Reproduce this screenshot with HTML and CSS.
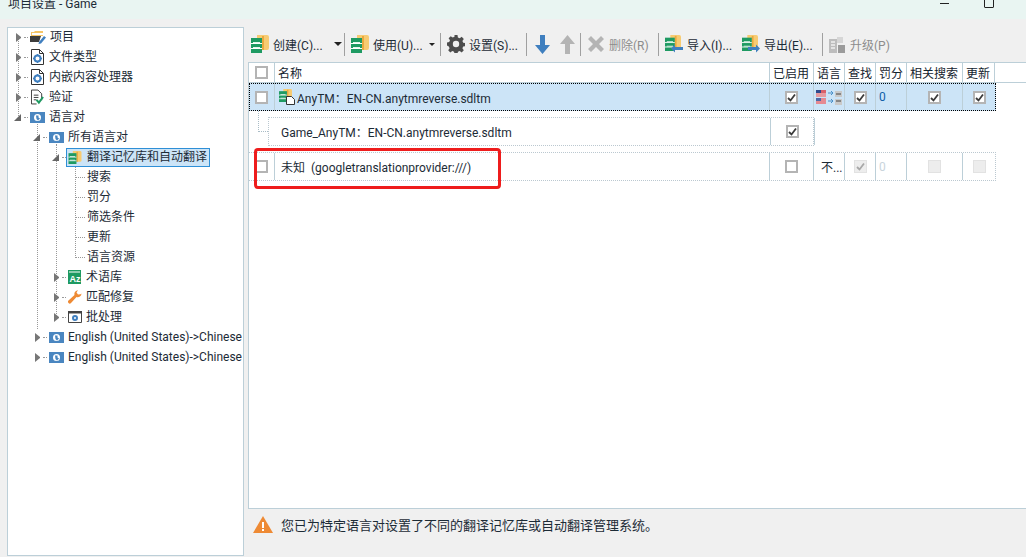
FILE: index.html
```html
<!DOCTYPE html>
<html lang="zh-CN">
<head>
    <meta charset="UTF-8">
    <title>项目设置 - Game</title>
    <link rel="stylesheet" href="styles.css">
</head>
<body>
    <svg class="defs" width="0" height="0">
        <symbol id="tm" viewBox="0 0 18 18">
            <path d="M6 0h10a2 2 0 0 1 2 2v11a2 2 0 0 1-2 2H6z" fill="#f7cb72"/>
            <path d="M11 1h2v14h-2z" fill="#e9a93f"/>
            <path d="M0 3h11v15H0z" fill="#1e9a62"/>
            <path d="M2 7h7v1H2zM2 12h7v1H2z" fill="#e6f6ee"/>
            <path d="M0 8.500h11M0 13.500h11" stroke="#fff"/>
        </symbol>
        <symbol id="globe" viewBox="0 0 15 11">
            <path d="M0 0h15v11H0z" fill="#4a86c0"/>
            <circle cx="7.500" cy="5.500" r="3.500" fill="#fff"/>
            <path d="M6 3.500h2.500v2l1.500 1L8 8.500 6.500 7z" fill="#4a86c0"/>
        </symbol>
        <symbol id="docgear" viewBox="0 0 13 16">
            <path d="M.5.500h8l4 4v11H.5z" fill="#fff" stroke="#333"/>
            <path d="M8.500.500v4h4" fill="none" stroke="#333"/>
            <circle cx="6.500" cy="9.500" r="3" fill="none" stroke="#3f7fbf" stroke-width="2"/>
            <path d="M6.500 5v1.500M6.500 12.500V14M2 9.500h1.500M9.500 9.500H11" stroke="#3f7fbf" stroke-width="1.500"/>
        </symbol>
        <symbol id="check" viewBox="0 0 9 9">
            <path d="M1 5l2.500 2.500L8 1.500" fill="none" stroke="currentColor" stroke-width="1.800"/>
        </symbol>
        <symbol id="gear" viewBox="0 0 18 18">
            <path d="M7.500 0h3l.4 2.400 1.800.8 2-1.400 2.100 2.100-1.400 2 .8 1.800 2.400.4v3l-2.400.4-.8 1.800 1.400 2-2.100 2.100-2-1.400-1.800.8-.4 2.400h-3l-.4-2.400-1.800-.8-2 1.400-2.100-2.100 1.400-2-.8-1.800L-.2 10.500v-3l2.400-.4.8-1.800-1.400-2 2.100-2.100 2 1.400 1.800-.8z" fill="#4d4d4d"/>
            <circle cx="9" cy="9" r="3.200" fill="#f0f0f0"/>
        </symbol>
    </svg>

    <header class="titlebar">
        <span class="title">项目设置 - Game</span>
        <span class="win-min"></span>
        <span class="win-max"></span>
    </header>

    <div class="main">
        <nav class="tree">
            <i class="vline vline-root"></i>
            <i class="vline vline-pairs"></i>
            <i class="vline vline-tm"></i>
            <i class="vline vline-sub"></i>

            <div class="node lv0"><b class="tri"></b><i class="dash"></i>
                <svg class="ico" width="16" height="14" viewBox="0 0 16 14"><path d="M1 2h3l1-1h8v5H1z" fill="#f5c566"/><path d="M2 3h11v2H2z" fill="#fff"/><path d="M0 6h11l-2 6H0z" fill="#3c3c3c"/><path d="M9 12l5-6 2 1.500-5 6-2.500.5z" fill="#3f7fbf"/></svg>
                <span>项目</span></div>
            <div class="node lv0"><b class="tri"></b><i class="dash"></i><svg class="ico doc" width="13" height="16"><use href="#docgear"/></svg><span>文件类型</span></div>
            <div class="node lv0"><b class="tri"></b><i class="dash"></i><svg class="ico doc" width="13" height="16"><use href="#docgear"/></svg><span>内嵌内容处理器</span></div>
            <div class="node lv0"><b class="tri"></b><i class="dash"></i>
                <svg class="ico doc" width="13" height="16" viewBox="0 0 14 16"><path d="M.5.500h7l4 4v7M6 15.500H.5V.500" fill="#fff" stroke="#333"/><path d="M3 6h5M3 8.500h5M3 11h3" stroke="#333"/><path d="M6 11l2.500 3L13 8" fill="none" stroke="#1e9a62" stroke-width="2.200"/></svg>
                <span>验证</span></div>
            <div class="node lv0"><b class="tri open"></b><i class="dash"></i><svg class="ico" width="15" height="11"><use href="#globe"/></svg><span>语言对</span></div>
            <div class="node lv1"><b class="tri open"></b><i class="dash"></i><svg class="ico" width="15" height="11"><use href="#globe"/></svg><span>所有语言对</span></div>
            <div class="node lv2"><b class="tri open"></b><i class="dash"></i>
                <div class="selected"><svg class="ico" width="14" height="13"><use href="#tm"/></svg><span>翻译记忆库和自动翻译</span></div></div>
            <div class="node lv3"><i class="dash"></i><span>搜索</span></div>
            <div class="node lv3"><i class="dash"></i><span>罚分</span></div>
            <div class="node lv3"><i class="dash"></i><span>筛选条件</span></div>
            <div class="node lv3"><i class="dash"></i><span>更新</span></div>
            <div class="node lv3"><i class="dash"></i><span>语言资源</span></div>
            <div class="node lv2"><b class="tri"></b><i class="dash"></i>
                <svg class="ico" width="13" height="14" viewBox="0 0 13 14"><path d="M0 0h13v14H0z" fill="#1e9a62"/><path d="M1 2h11" stroke="#fff"/><text class="az" x="1.500" y="12">Az</text></svg>
                <span class="term">术语库</span></div>
            <div class="node lv2"><b class="tri"></b><i class="dash"></i>
                <svg class="ico" width="14" height="14" viewBox="0 0 14 14"><path d="M13.500 3.500a3.800 3.800 0 0 1-5 3.600L3 13a1.700 1.700 0 0 1-2.500-2.500L6.500 5A3.800 3.800 0 0 1 10 .2L8.500 2.500 10 4.500l2.500-.2z" fill="#ee8a34"/></svg>
                <span>匹配修复</span></div>
            <div class="node lv2"><b class="tri"></b><i class="dash"></i>
                <svg class="ico" width="14" height="12" viewBox="0 0 14 12"><path d="M.5.500h13v11H.5z" fill="#fff" stroke="#444"/><path d="M0 0h14v2.500H0z" fill="#444"/><circle cx="7" cy="7" r="2" fill="none" stroke="#3f7fbf" stroke-width="2"/></svg>
                <span>批处理</span></div>
            <div class="node lv1"><b class="tri"></b><i class="dash"></i><svg class="ico" width="15" height="11"><use href="#globe"/></svg><span>English (United States)-&gt;Chinese (</span></div>
            <div class="node lv1"><b class="tri"></b><i class="dash"></i><svg class="ico" width="15" height="11"><use href="#globe"/></svg><span>English (United States)-&gt;Chinese (</span></div>
        </nav>

        <div class="content">
            <div class="toolbar">
                <button class="tool w-create"><svg width="18" height="18"><use href="#tm"/></svg>创建(C)...</button>
                <b class="caret"></b><i class="sep"></i>
                <button class="tool w-use"><svg width="18" height="18"><use href="#tm"/></svg>使用(U)...</button>
                <b class="caret small"></b><i class="sep"></i>
                <button class="tool w-set"><svg width="18" height="18"><use href="#gear"/></svg>设置(S)...</button>
                <i class="sep s-move"></i>
                <button class="tool w-down"><svg width="15" height="19" viewBox="0 0 15 19"><path d="M5 0h5v10h5l-7.500 9L0 10h5z" fill="#3f7fbf"/></svg></button>
                <button class="tool w-up off"><svg width="15" height="19" viewBox="0 0 15 19"><path d="M5 19h5V9h5L7.500 0 0 9h5z" fill="#b4b4b4"/></svg></button>
                <i class="sep s-del"></i>
                <button class="tool w-del off"><svg width="16" height="16" viewBox="0 0 16 16"><path d="M0 3l3-3 5 5 5-5 3 3-5 5 5 5-3 3-5-5-5 5-3-3 5-5z" fill="#b4b4b4"/></svg>删除(R)</button>
                <i class="sep"></i>
                <button class="tool w-imp"><svg width="18" height="18" viewBox="0 0 18 18"><use href="#tm" width="16" height="16"/><path d="M18 12H10V9.500L6 13.500l4 4V15h8z" fill="#3f7fbf"/></svg>导入(I)...</button>
                <button class="tool w-exp"><svg width="18" height="18" viewBox="0 0 18 18"><use href="#tm" width="16" height="16"/><path d="M6 12h8V9.500l4 4-4 4V15H6z" fill="#3f7fbf"/></svg>导出(E)...</button>
                <i class="sep"></i>
                <button class="tool w-upg off"><svg width="16" height="17" viewBox="0 0 16 17"><path d="M0 3h8v14H0z" fill="#bdbdbd"/><path d="M2 6h4M2 9h4M2 12h4" stroke="#f0f0f0" stroke-width="1.500"/><path d="M8 1h6v6H8z" fill="#d6d6d6"/><path d="M9 9h7v8H9z" fill="#9b9b9b"/></svg>升级(P)</button>
            </div>

            <div class="panel">
                <div class="grid head">
                    <div class="cell center"><span class="box"></span></div>
                    <div class="cell">名称</div>
                    <div class="cell">已启用</div>
                    <div class="cell">语言</div>
                    <div class="cell">查找</div>
                    <div class="cell">罚分</div>
                    <div class="cell">相关搜索</div>
                    <div class="cell">更新</div>
                </div>

                <div class="grid row current">
                    <div class="cell center"><span class="box"></span></div>
                    <div class="cell name"><svg width="16" height="16" viewBox="0 0 16 16"><use href="#tm" width="13" height="13"/><path d="M7.500 7.500h5l3 3v5h-8z" fill="#fff" stroke="#333"/></svg>AnyTM：EN-CN.anytmreverse.sdltm</div>
                    <div class="cell center"><span class="box"><svg width="9" height="9"><use href="#check"/></svg></span></div>
                    <div class="cell center">
                        <svg width="26" height="16" viewBox="0 0 26 16">
                            <path d="M0 1h10v7H0z" fill="#d9606a"/><path d="M0 1h5v3H0z" fill="#2f4a8c"/><path d="M0 5h10M0 7h10" stroke="#f3d4d6"/>
                            <path d="M0 9h10v6H0z" fill="#e58a92"/><path d="M0 9h5v3H0z" fill="#4f68a6"/>
                            <path d="M12 4h5M15 2l2 2-2 2M12 12h5M15 10l2 2-2 2" fill="none" stroke="#4a90c8"/>
                            <path d="M19 2h7v6h-7zM19 10h7v6h-7z" fill="#c9c9c9"/><path d="M20 5h5M20 12h5" stroke="#444"/>
                        </svg>
                    </div>
                    <div class="cell center"><span class="box"><svg width="9" height="9"><use href="#check"/></svg></span></div>
                    <div class="cell num">0</div>
                    <div class="cell center"><span class="box"><svg width="9" height="9"><use href="#check"/></svg></span></div>
                    <div class="cell center last"><span class="box"><svg width="9" height="9"><use href="#check"/></svg></span></div>
                </div>

                <div class="grid row child">
                    <div class="cell name">Game_AnyTM：EN-CN.anytmreverse.sdltm</div>
                    <div class="cell center"><span class="box"><svg width="9" height="9"><use href="#check"/></svg></span></div>
                </div>

                <div class="grid row unknown">
                    <div class="cell center"><span class="box"></span></div>
                    <div class="cell name plain">未知&nbsp; (googletranslationprovider:///)</div>
                    <div class="cell center"><span class="box"></span></div>
                    <div class="cell lang">不...</div>
                    <div class="cell center"><span class="box off"><svg width="9" height="9"><use href="#check"/></svg></span></div>
                    <div class="cell num off">0</div>
                    <div class="cell center"><span class="box off"></span></div>
                    <div class="cell center last"><span class="box off"></span></div>
                </div>

                <i class="connector"></i>
                <i class="callout"></i>
            </div>

            <div class="notice">
                <svg width="20" height="17" viewBox="0 0 20 17"><path d="M10 0l10 17H0z" fill="#ee8a34"/><path d="M9 6h2v6H9zM9 13h2v2H9z" fill="#fff"/></svg>
                <span>您已为特定语言对设置了不同的翻译记忆库或自动翻译管理系统。</span>
            </div>
        </div>
    </div>
</body>
</html>
```

FILE: styles.css
```css
* {
    box-sizing: border-box;
}

html, body {
    height: 100%;
}

body {
    margin: 0;
    overflow: hidden;
    background: #f0f0f0;
    color: #1c2b36;
    font-family: Roboto, "Noto Sans CJK SC", sans-serif;
    font-size: 12px;
}

.defs {
    position: absolute;
}

/* title bar, cut off by the screenshot */
.titlebar {
    position: relative;
    height: 19px;
    background: #e9f5f2;
    overflow: hidden;
}

.title {
    display: block;
    margin: -5px 0 0 8px;
    line-height: 18px;
}

.win-min {
    position: absolute;
    left: 940px;
    top: 3px;
    width: 9px;
    border-top: 1px solid #222;
}

.win-max {
    position: absolute;
    left: 984px;
    top: -3px;
    width: 10px;
    height: 11px;
    border: 1px solid #222;
    border-radius: 1px;
}

.main {
    display: flex;
    gap: 4px;
    height: 538px;
    padding: 8px 0 0 7px;
}

/* tree */
.tree {
    position: relative;
    flex: none;
    width: 237px;
    height: 529px;
    border: 1px solid #bccfd8;
    background: #fff;
    overflow: hidden;
    white-space: nowrap;
}

.node {
    position: relative;
    display: flex;
    align-items: center;
    height: 20px;
    top: -1px;
    line-height: 20px;
}

.lv0 { padding-left: 8px; }
.lv1 { padding-left: 27px; }
.lv2 { padding-left: 46px; }
.lv3 { padding-left: 67px; }

.tri {
    flex: none;
    width: 5px;
    height: 9px;
    border-style: solid;
    border-width: 4.5px 0 4.5px 5px;
    border-color: transparent transparent transparent #777;
}

.tri.open {
    width: 7px;
    height: 7px;
    margin-left: -2px;
    border-width: 0 0 7px 7px;
    border-color: transparent transparent #666 transparent;
}

.dash {
    flex: none;
    width: 4px;
    margin: 0 2px 0 3px;
    border-top: 1px dotted #999;
}

.lv3 .dash {
    width: 10px;
    margin: 0 2px 0 0;
}

.ico {
    flex: none;
    margin-right: 4px;
}

.doc {
    margin-left: 1px;
    margin-right: 5px;
}

.term {
    margin-left: 1px;
}

.az {
    fill: #fff;
    font: bold 9px "Liberation Sans", sans-serif;
}

.selected {
    display: flex;
    align-items: center;
    width: 144px;
    height: 19px;
    margin-left: -2px;
    padding-left: 1px;
    border: 1px solid #2f8fd6;
    background: #cce4f7;
}

.selected .ico {
    margin-right: 5px;
}

.vline {
    position: absolute;
    border-left: 1px dotted #999;
}

.vline-root { left: 10px; top: 8px; height: 82px; }
.vline-pairs { left: 29px; top: 96px; height: 205px; }
.vline-tm { left: 48px; top: 116px; height: 172px; }
.vline-sub { left: 67px; top: 139px; height: 91px; }

/* toolbar */
.content {
    flex: 1;
    display: flex;
    flex-direction: column;
    min-width: 0;
}

.toolbar {
    display: flex;
    align-items: center;
    height: 28px;
    margin-top: 3px;
    padding-left: 3px;
    white-space: nowrap;
}

.tool {
    display: flex;
    flex: none;
    align-items: center;
    gap: 4px;
    padding: 0;
    border: 0;
    background: none;
    color: inherit;
    font: inherit;
}

.tool.off {
    color: #8c8c8c;
}

.w-create { width: 83px; }
.w-use { width: 78px; }
.w-set { width: 79px; }
.w-down { width: 25px; }
.w-up { width: 20px; }
.w-del { width: 70px; gap: 5px; }
.w-imp { width: 77px; }
.w-exp { width: 80px; }
.w-upg { gap: 5px; }

.caret {
    width: 0;
    margin-right: 2px;
    border-style: solid;
    border-width: 4px 4px 0;
    border-color: #222 transparent transparent;
}

.caret.small {
    margin-right: 5px;
    border-width: 3px 3.500px 0;
}

.sep {
    flex: none;
    width: 1px;
    height: 23px;
    margin-right: 6px;
    background: #a0a0a0;
}

.s-move { margin-right: 8px; }
.s-del { margin-right: 7px; }

/* table */
.panel {
    position: relative;
    height: 447px;
    margin-top: 4px;
    border: 1px solid #bccfd8;
    border-right: 0;
    background: #fff;
}

.grid {
    display: grid;
    grid-template-columns: 26px 495px 44px 31px 31px 31px 56px 32px;
    width: 747px;
}

.cell {
    display: flex;
    align-items: center;
    padding-left: 3px;
    border-right: 1px solid #bccfd8;
    white-space: nowrap;
    overflow: hidden;
}

.center {
    justify-content: center;
    padding-left: 0;
}

.head {
    width: auto;
    height: 20px;
    border-bottom: 1px solid #bccfd8;
}

.head .cell {
    color: #14232e;
}

.row {
    height: 29px;
}

.current {
    height: 28px;
    background: #cce4f7;
    outline: 1px dotted #000;
    outline-offset: -1px;
}

.child {
    grid-template-columns: 502px 44px;
    width: 546px;
    margin: 6px 0 6px 19px;
    border: 1px dotted #bbc8d0;
}

.unknown {
    border: 1px dotted #bbc8d0;
    border-width: 1px 1px 1px 0;
}

.name svg {
    flex: none;
    margin: 0 2px 0 1px;
}

.child .name {
    padding-left: 12px;
}

.plain {
    padding-left: 6px;
}

.last {
    border-right: 0;
}

.num {
    color: #0f5ea8;
}

.num.off {
    color: #c9d4dc;
}

.lang {
    padding-left: 7px;
}

.box {
    display: flex;
    align-items: center;
    justify-content: center;
    width: 13px;
    height: 13px;
    border: 2px solid #b4b4b4;
    background: #fff;
    color: #3a3a3a;
}

.box.off {
    border: 1px solid #e2e2e2;
    background: #ededed;
    color: #a8a8a8;
}

.connector {
    position: absolute;
    left: 9px;
    top: 48px;
    width: 10px;
    height: 21px;
    border-left: 1px dotted #a9bcc6;
    border-bottom: 1px dotted #a9bcc6;
}

/* red box someone drew on the screenshot */
.callout {
    position: absolute;
    left: 5px;
    top: 85px;
    width: 247px;
    height: 41px;
    border: 3px solid #ee1c1c;
    border-radius: 4px;
}

.notice {
    display: flex;
    align-items: center;
    gap: 8px;
    padding: 6px 0 0 5px;
    font-size: 13px;
}
```
